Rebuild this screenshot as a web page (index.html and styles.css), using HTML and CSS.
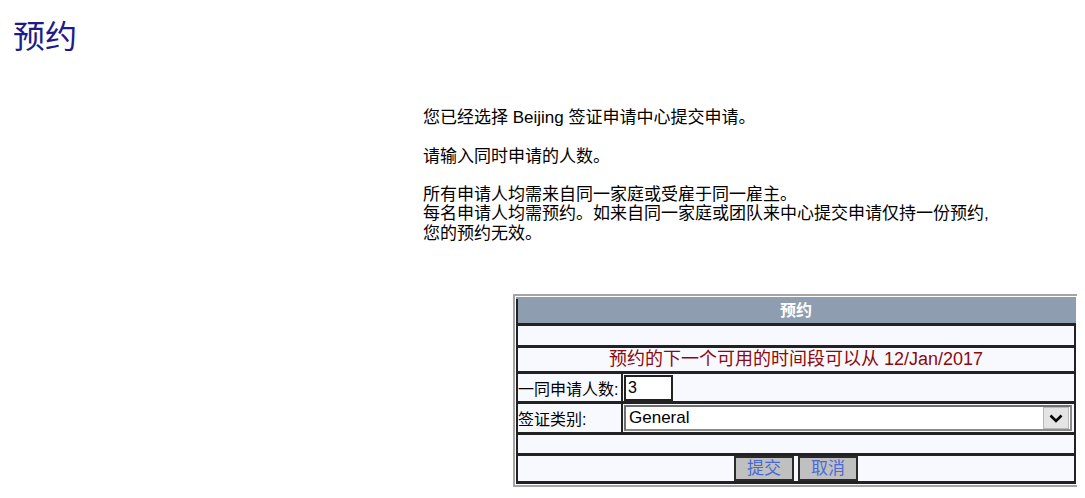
FILE: index.html
```html
<!DOCTYPE html>
<html lang="zh-CN">
<head>
    <meta charset="UTF-8">
    <title>预约</title>
    <link rel="stylesheet" href="styles.css">
</head>
<body>
    <h1 class="page-title">预约</h1>

    <div class="intro">
        您已经选择 Beijing 签证申请中心提交申请。<br><br>
        请输入同时申请的人数。<br><br>
        所有申请人均需来自同一家庭或受雇于同一雇主。<br>
        每名申请人均需预约。如来自同一家庭或团队来中心提交申请仅持一份预约,<br>
        您的预约无效。
    </div>

    <!-- 预约表单 -->
    <div class="booking">
        <table class="booking-table">
            <tr class="row-head">
                <th colspan="2">预约</th>
            </tr>
            <tr class="row-empty">
                <td colspan="2"></td>
            </tr>
            <tr class="row-notice">
                <td colspan="2">预约的下一个可用的时间段可以从 12/Jan/2017</td>
            </tr>
            <tr class="row-field">
                <td class="label">一同申请人数:</td>
                <td><input type="text" class="count-input" value="3"></td>
            </tr>
            <tr class="row-field">
                <td class="label">签证类别:</td>
                <td>
                    <div class="select-box">
                        <span class="select-value">General</span>
                        <span class="select-arrow">
                            <svg width="14" height="9" viewBox="0 0 14 9"><path d="M1.5 1.5 L7 7 L12.5 1.5" fill="none" stroke="#000" stroke-width="2.6"/></svg>
                        </span>
                    </div>
                </td>
            </tr>
            <tr class="row-empty">
                <td colspan="2"></td>
            </tr>
            <tr class="row-actions">
                <td colspan="2">
                    <button class="btn">提交</button><button class="btn">取消</button>
                </td>
            </tr>
        </table>
    </div>
</body>
</html>
```

FILE: styles.css
```css
/* 基本样式 */
body {
    margin: 8px;
    font-family: "Liberation Sans", "Noto Sans CJK SC", sans-serif;
    font-size: 16px;
    color: #000;
    background: #fff;
}

.page-title {
    margin: 8px 0 0 5px;
    font-family: "Noto Sans CJK SC", serif;
    font-weight: normal;
    font-size: 32px;
    line-height: 36px;
    color: #1b1b8a;
}

.intro {
    margin: 56px 0 0 415px;
    font-size: 17px;
    line-height: 19.3px;
}

/* 预约表单 */
.booking {
    width: 560px;
    margin: 51px 0 0 505px;
    border: 2px solid #a4a4a4;
    padding: 1px;
}

.booking-table {
    width: 100%;
    border-collapse: collapse;
}

.booking-table td {
    border: solid #222;
    border-width: 3px 2px;
    background: #f8f8ff;
    padding: 0;
}

.row-head th {
    background: #8e9eb0;
    color: #fff;
    font-weight: bold;
    height: 24px;
    line-height: 20px;
    padding: 0;
    border: 2px solid #8e9eb0;
    border-bottom: 3px solid #222;
    border-left: 2px solid #222;
}

.row-empty td {
    height: 19px;
}

.row-field + .row-empty td {
    height: 18px;
}

.row-notice td {
    height: 23px;
    line-height: 21px;
    text-align: center;
    font-size: 18px;
    color: #8b0a0a;
}

.row-field td {
    height: 27px;
}

.row-field .label {
    width: 103px;
    white-space: nowrap;
}

.count-input {
    display: block;
    width: 49px;
    height: 26px;
    margin: 0 0 0 1px;
    padding: 0 2px;
    border: 2px solid #222;
    background: #fff;
    font-family: inherit;
    font-size: 16px;
    box-sizing: border-box;
}

.select-box {
    display: flex;
    align-items: center;
    justify-content: space-between;
    margin: 1px 2px 1px 1px;
    height: 26px;
    border: 2px solid #8a8a8a;
    border-top-color: #6f6f6f;
    border-left-color: #6f6f6f;
    background: #fff;
    box-sizing: border-box;
    font-size: 17px;
}

.select-value {
    padding-left: 3px;
}

.select-arrow {
    display: flex;
    align-items: center;
    justify-content: center;
    width: 24px;
    height: 20px;
    margin-right: 1px;
    background: #e4e4e4;
    border: 1px solid #b8b8b8;
}

.row-actions td {
    height: 25px;
    text-align: center;
    font-size: 0;
}

.btn {
    width: 60px;
    height: 25px;
    margin: 0 2px;
    padding: 0;
    border: 2px solid #2a2a2a;
    background: #c0c0c0;
    color: #4a6ad6;
    font-family: inherit;
    font-size: 17px;
    line-height: 20px;
    vertical-align: middle;
}
```
